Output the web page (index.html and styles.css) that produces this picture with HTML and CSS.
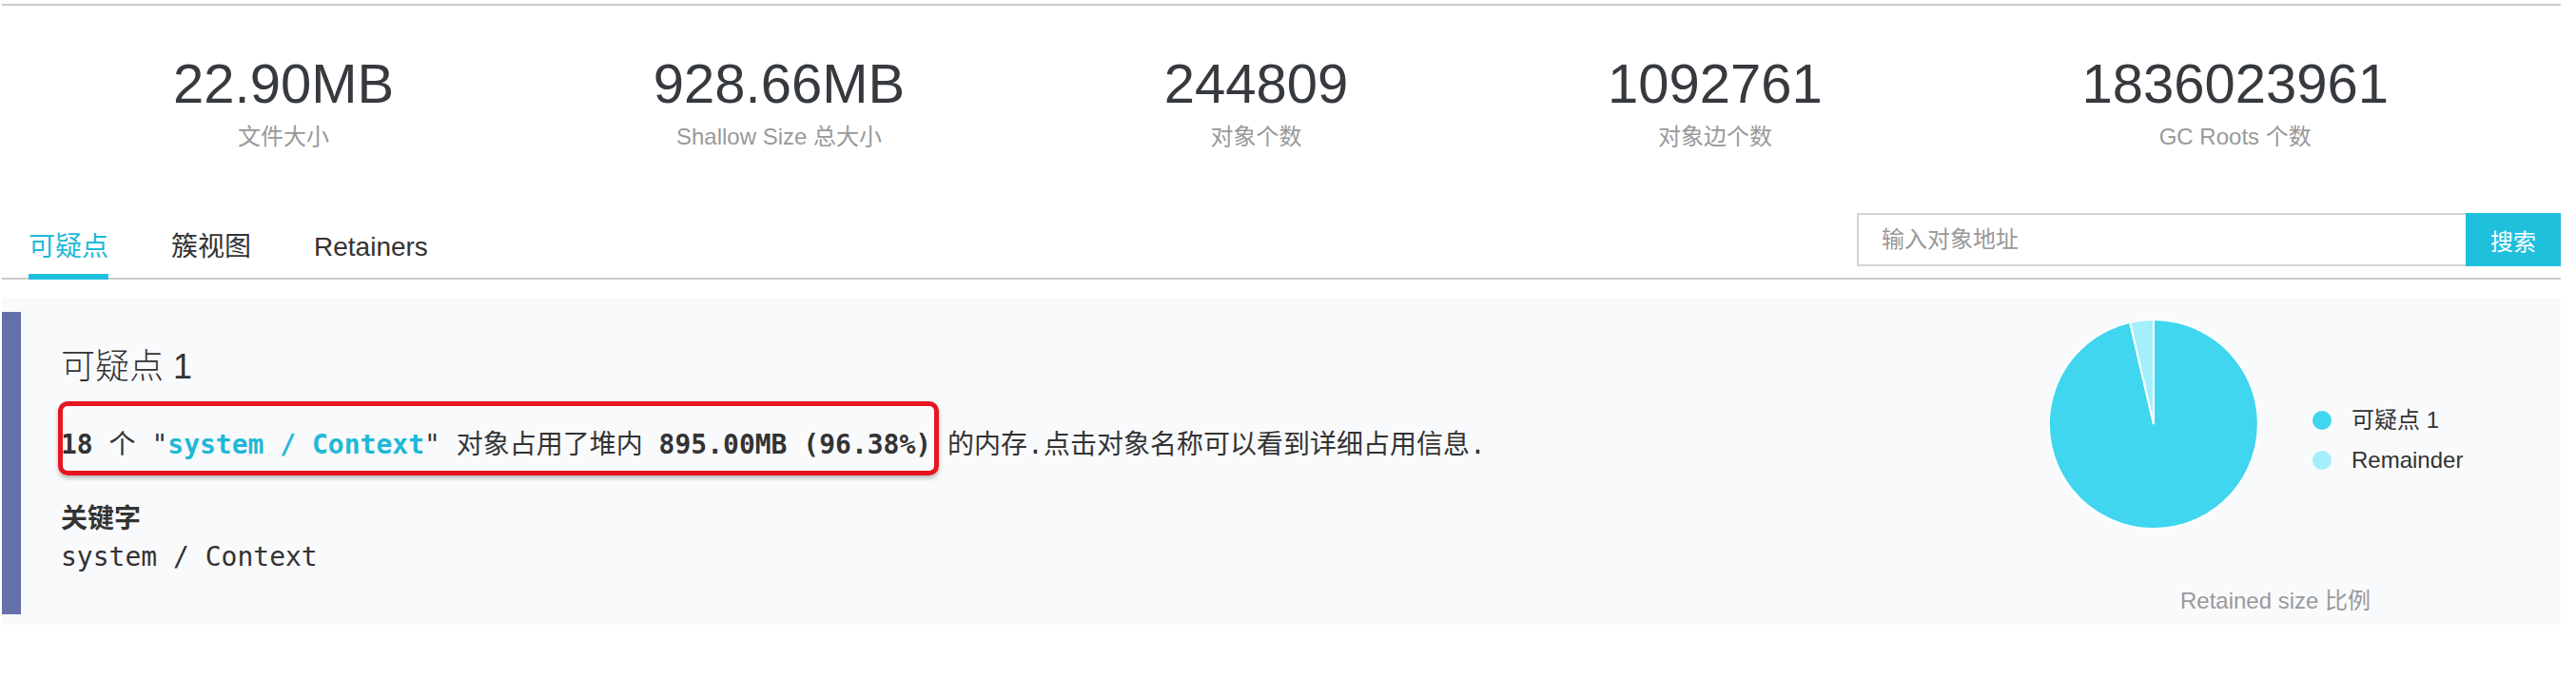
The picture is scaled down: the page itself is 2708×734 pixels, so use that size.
FILE: index.html
```html
<!DOCTYPE html>
<html>
<head>
<meta charset="utf-8">
<title>堆分析报告</title>
<link rel="stylesheet" href="styles.css">
</head>
<body>

<div class="page">

  <div class="stats">
    <div class="stat"><p class="num">22.90MB</p><p class="label">文件大小</p></div>
    <div class="stat"><p class="num">928.66MB</p><p class="label">Shallow Size 总大小</p></div>
    <div class="stat"><p class="num">244809</p><p class="label">对象个数</p></div>
    <div class="stat"><p class="num">1092761</p><p class="label">对象边个数</p></div>
    <div class="stat"><p class="num">1836023961</p><p class="label">GC Roots 个数</p></div>
  </div>

  <div class="tabbar">
    <div class="tabs">
      <a href="#" class="tab active">可疑点</a>
      <a href="#" class="tab">簇视图</a>
      <a href="#" class="tab">Retainers</a>
    </div>
    <form class="search" onsubmit="return false;">
      <input type="text" placeholder="输入对象地址">
      <button type="submit">搜索</button>
    </form>
  </div>

  <div class="panel">
    <div class="suspect">
      <div class="detail">
        <h3>可疑点 1</h3>
        <p class="desc"><span class="mark"></span><b>18</b> 个 "<b class="obj">system / Context</b>" 对象占用了堆内 <b>895.00MB (96.38%)</b> 的内存.点击对象名称可以看到详细占用信息.</p>
        <h4>关键字</h4>
        <p class="kw">system / Context</p>
      </div>

      <div class="chart">
        <div class="chartrow">
          <svg class="pie" width="220" height="220" viewBox="0 0 220 220">
            <path d="M110,110 L110,0 A110,110 0 1 1 85.2,2.8 Z" fill="#40d6f0" stroke="#fff" stroke-width="2"/>
            <path d="M110,110 L85.2,2.8 A110,110 0 0 1 110,0 Z" fill="#a3effc" stroke="#fff" stroke-width="2"/>
          </svg>
          <ul class="legend">
            <li><i class="dot c1"></i>可疑点 1</li>
            <li><i class="dot c2"></i>Remainder</li>
          </ul>
        </div>
        <p class="caption">Retained size 比例</p>
      </div>
    </div>
  </div>

</div>

</body>
</html>
```

FILE: styles.css
```css
body { margin:0; background:#fff; font-family:"Liberation Sans", "Noto Sans CJK SC", sans-serif; color:#333; }
p, h3, h4, ul { margin:0; padding:0; }
a { text-decoration:none; }

.page { margin-left:2px; width:2690px; padding-top:4px; }

/* 顶部统计 */
.stats { display:flex; justify-content:space-between; border-top:2px solid #ccc; padding:53px 181px 68px 180px; }
.stat { text-align:center; }
.stat .num { font-size:58px; line-height:58px; color:#363a3e; }
.stat .label { font-size:24px; line-height:24px; margin-top:15px; color:#999; }

/* tab + 搜索 */
.tabbar { display:flex; justify-content:space-between; align-items:flex-end; border-bottom:2px solid #ccc; }
.tabs { display:flex; padding-left:28px; }
.tab { font-size:28px; line-height:28px; color:#333; padding-bottom:14px; border-bottom:6px solid transparent; margin:0 66px -2px 0; }
.tab.active { color:#1fb8d8; border-bottom-color:#1fc0dc; }
.search { display:flex; margin-bottom:12px; }
.search input { box-sizing:border-box; width:640px; height:56px; border:2px solid #d4d4da; border-right:0; padding:0 0 0 24px; font:24px "Liberation Sans", "Noto Sans CJK SC", sans-serif; color:#333; background:#fff; outline:none; }
.search input::placeholder { color:#999; }
.search button { width:100px; height:56px; border:0; background:#1fc0dc; color:#fff; font:24px "Liberation Sans", "Noto Sans CJK SC", sans-serif; padding:0; }

/* 可疑点面板 */
.panel { margin-top:19px; background:#f9fafc; padding:15px 0 11px 0; }
.suspect { display:flex; border-left:20px solid #6670a8; }
.detail { flex:1; padding:40px 0 40px 42px; }
.detail h3 { font-size:36px; line-height:36px; font-weight:300; color:#333; }
.desc { position:relative; margin-top:44px; font-family:"DejaVu Sans Mono", "Noto Sans CJK SC", monospace; font-size:28px; line-height:40px; color:#333; white-space:nowrap; }
.desc b { font-weight:bold; }
.desc b.obj { color:#1fb8d8; }
.mark { position:absolute; left:-3px; top:-26px; width:926px; height:78px; box-sizing:border-box; border:5px solid #e8151f; border-radius:10px; box-shadow:0 3px 4px rgba(0,0,0,.25); }
.detail h4 { margin-top:40px; font-size:28px; line-height:36px; font-weight:bold; color:#333; }
.kw { margin-top:2px; font-family:"DejaVu Sans Mono", monospace; font-size:28px; line-height:40px; color:#333; }

/* 饼图 */
.chart { width:476px; margin-right:62px; padding-top:8px; }
.chartrow { display:flex; align-items:flex-start; }
.pie { display:block; }
.legend { list-style:none; margin:85px 0 0 57px; }
.legend li { display:flex; align-items:center; font-size:24px; line-height:42px; color:#333; white-space:nowrap; }
.dot { display:inline-block; width:20px; height:20px; border-radius:50%; margin-right:21px; }
.dot.c1 { background:#40d6f0; }
.dot.c2 { background:#a3effc; }
.caption { margin-top:64px; text-align:center; font-size:24px; line-height:24px; color:#999; }
```
